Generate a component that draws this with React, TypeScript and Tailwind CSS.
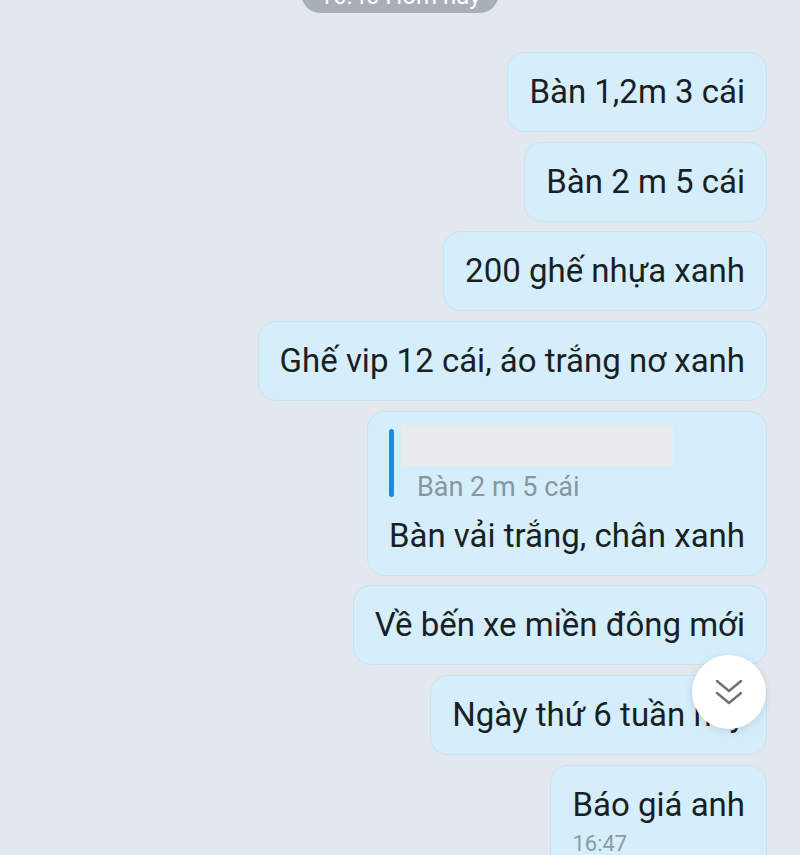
import { useState } from "react"

const messages = [
    "Bàn 1,2m 3 cái",
    "Bàn 2 m 5 cái",
    "200 ghế nhựa xanh",
    "Ghế vip 12 cái, áo trắng nơ xanh",
]

const after = ["Về bến xe miền đông mới", "Ngày thứ 6 tuần này"]

function Bubble({ children }: { children: React.ReactNode }) {
    return (
        <div className="rounded-[18px] border border-[#c9e2f2] bg-[#d5eefb] px-[21px] py-[20px] text-[33px] leading-[38px] text-[#1a1f24]">
            {children}
        </div>
    )
}

export default function App() {
    const [showDown] = useState(true)

    return (
        <div
            className="relative h-[855px] w-full overflow-hidden bg-[#e3e8ee]"
            style={{ fontFamily: "Roboto, 'Noto Sans', sans-serif" }}
        >
            {/* date pill, mostly scrolled off the top */}
            <div className="flex justify-center">
                <div className="mt-[-27px] whitespace-nowrap rounded-[20px] bg-[#a8afb7] px-[18px] pt-[9px] pb-[3px] text-[24px] leading-[28px] text-white">
                    16:46 Hôm nay
                </div>
            </div>

            <div className="mt-[39px] flex flex-col items-end gap-[9.7px] pr-[33px]">
                {messages.map((m) => (
                    <Bubble key={m}>{m}</Bubble>
                ))}

                {/* reply bubble */}
                <div className="rounded-[18px] border border-[#c9e2f2] bg-[#d5eefb] px-[21px] pt-[13px] pb-[20px] text-[#1a1f24]">
                    <div className="flex gap-[7px]">
                        <div className="mt-[4px] h-[68px] w-[5px] rounded-full bg-[#1e88e5]" />
                        <div className="flex flex-col">
                            <div className="h-[41px] w-[272px] bg-[#e9ecee]" />
                            <div className="mt-[6px] pl-[16px] text-[27px] leading-[30px] text-[#8995a0]">
                                Bàn 2 m 5 cái
                            </div>
                        </div>
                    </div>
                    <div className="mt-[15px] text-[33px] leading-[38px]">
                        Bàn vải trắng, chân xanh
                    </div>
                </div>

                {after.map((m) => (
                    <Bubble key={m}>{m}</Bubble>
                ))}

                <div className="rounded-[18px] border border-[#c9e2f2] bg-[#d5eefb] px-[21px] pt-[20px] pb-[20px] text-[#1a1f24]">
                    <div className="text-[33px] leading-[38px]">Báo giá anh</div>
                    <div className="mt-[7px] text-[22px] leading-[26px] text-[#8b9aa7]">
                        16:47
                    </div>
                    <div className="mt-[4px] flex justify-end gap-[40px]">
                        <div className="h-[36px] w-[36px] rounded-full bg-[#c4d3de]" />
                        <div className="h-[36px] w-[36px] rounded-full bg-white" />
                    </div>
                </div>
            </div>

            {showDown && (
                <div className="absolute left-[692px] top-[655px] flex h-[74px] w-[74px] items-center justify-center rounded-full bg-white shadow-[0_2px_8px_rgba(0,0,0,0.12)]">
                    <svg width="30" height="30" viewBox="0 0 30 30" fill="none">
                        <path
                            d="M3 4 L15 14 L27 4"
                            stroke="#6b7177"
                            strokeWidth="2.4"
                            strokeLinecap="round"
                            strokeLinejoin="round"
                        />
                        <path
                            d="M3 16 L15 26 L27 16"
                            stroke="#6b7177"
                            strokeWidth="2.4"
                            strokeLinecap="round"
                            strokeLinejoin="round"
                        />
                    </svg>
                </div>
            )}
        </div>
    )
}
